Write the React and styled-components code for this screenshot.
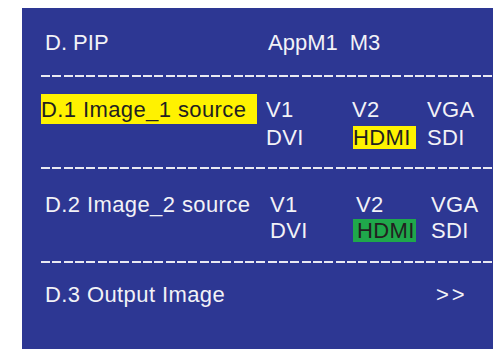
import React from "react";
import styled, { createGlobalStyle } from "styled-components";

const GlobalStyle = createGlobalStyle`
  html, body {
    margin: 0;
    padding: 0;
    background: #ffffff;
    overflow: hidden;
  }
  body {
    font-family: "Liberation Sans", Arial, sans-serif;
  }
`;

const Panel = styled.div`
  margin: 8px 0 0 22px;
  height: 341px;
  background: #2d3793;
  color: #f2f2f7;
  overflow: hidden;
  padding-left: 23px;
  display: flex;
  flex-direction: column;
  font-size: 22px;
  line-height: 23px;
  letter-spacing: 0.4px;
`;

const Row = styled.div`
  display: grid;
  grid-template-columns: 225px 86px 75px 80px;
  align-items: center;
  margin-top: ${(p) => p.$top}px;
  margin-left: ${(p) => p.$shift || 0}px;
  white-space: nowrap;
`;

const Header = styled.div`
  display: flex;
  margin-top: ${(p) => p.$top}px;
  white-space: nowrap;
  letter-spacing: 0;
`;

const Title = styled.span`
  width: 223px;
`;

const Mode = styled.span`
  & + & {
    margin-left: 12px;
  }
`;

const Dashes = styled.div`
  margin-top: ${(p) => p.$top}px;
  margin-left: -4px;
  height: 2px;
  background: repeating-linear-gradient(
    90deg,
    #e9e9f2 0 9px,
    transparent 9px 11.33px
  );
`;

const Label = styled.span`
  display: inline-block;
  justify-self: start;
  ${(p) =>
    p.$active &&
    `
    background: #fff200;
    color: #231f20;
    padding: 3.5px 11px 3.5px 0;
  `}
`;

const Cell = styled.span`
  display: inline-block;
  justify-self: start;
`;

const Mark = styled.span`
  display: inline-block;
  justify-self: start;
  color: #231f20;
  background: ${(p) => (p.$tone === "green" ? "#1fa84b" : "#fff200")};
  margin-left: ${(p) => p.$offset}px;
  padding: 0 ${(p) => p.$right}px 0 ${(p) => p.$left}px;
`;

const Arrows = styled.span`
  margin-left: 5px;
  letter-spacing: 3px;
`;

export default function App() {
  return (
    <>
      <GlobalStyle />
      <Panel>
        <Header $top={23}>
          <Title>D. PIP</Title>
          <Mode>AppM1</Mode>
          <Mode>M3</Mode>
        </Header>

        <Dashes $top={21} />

        <Row $top={17} $shift={-4}>
          <Label $active>D.1 Image_1 source</Label>
          <Cell>V1</Cell>
          <Cell>V2</Cell>
          <Cell>VGA</Cell>
        </Row>
        <Row $top={2} $shift={-4}>
          <span />
          <Cell>DVI</Cell>
          <Mark $offset={1} $left={0} $right={5}>
            HDMI
          </Mark>
          <Cell>SDI</Cell>
        </Row>

        <Dashes $top={18} />

        <Row $top={24}>
          <Label>D.2 Image_2 source</Label>
          <Cell>V1</Cell>
          <Cell>V2</Cell>
          <Cell>VGA</Cell>
        </Row>
        <Row $top={3}>
          <span />
          <Cell>DVI</Cell>
          <Mark $tone="green" $offset={-3} $left={4} $right={1}>
            HDMI
          </Mark>
          <Cell>SDI</Cell>
        </Row>

        <Dashes $top={19} />

        <Row $top={20}>
          <Label>D.3 Output Image</Label>
          <span />
          <span />
          <Arrows>&gt;&gt;</Arrows>
        </Row>
      </Panel>
    </>
  );
}
